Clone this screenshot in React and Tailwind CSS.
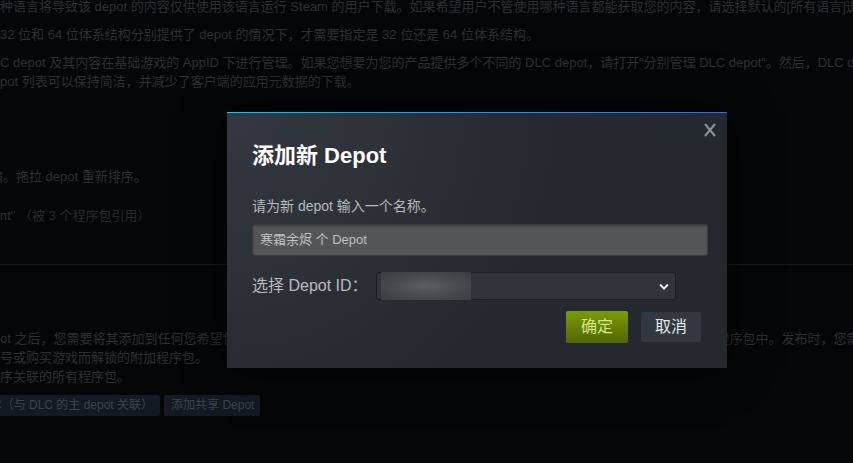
import React from "react";

const FONT = { fontFamily: '"Liberation Sans", "Noto Sans CJK SC", sans-serif' };

export default function App() {
  return (
    <div
      className="relative w-[853px] h-[463px] overflow-hidden bg-[#050608]"
      style={FONT}
    >
      {/* dimmed page content */}
      <div className="text-[13px] leading-[19px] text-[#2d2e31] -mt-[3px]">
        <p className="whitespace-nowrap mb-[9px]">
          种语言将导致该 depot 的内容仅供使用该语言运行 Steam 的用户下载。如果希望用户不管使用哪种语言都能获取您的内容，请选择默认的[所有语言]选项。
        </p>
        <p className="whitespace-nowrap mb-[9px]">
          32 位和 64 位体系结构分别提供了 depot 的情况下，才需要指定是 32 位还是 64 位体系结构。
        </p>
        <p className="whitespace-nowrap">
          C depot 及其内容在基础游戏的 AppID 下进行管理。如果您想要为您的产品提供多个不同的 DLC depot，请打开“分别管理 DLC depot”。然后，DLC depot 将单独列出。
        </p>
        <p className="whitespace-nowrap">
          pot 列表可以保持简洁，并减少了客户端的应用元数据的下载。
        </p>
        <p className="whitespace-nowrap mt-[76px] -ml-[10px]">
          编。拖拉 depot 重新排序。
        </p>
        <p className="whitespace-nowrap mt-[20px]">
          nt" <span className="text-[#28292c]">（被 3 个程序包引用）</span>
        </p>
        <div className="mt-[39px] h-px bg-[#15181d]" />
        <div className="mt-[64px]">
          <p className="whitespace-nowrap">
            ot 之后，您需要将其添加到任何您希望包含此内容的基础游戏程序包、开发者综合包、测试版本，以及免费周末等其他相关的程序包中。发布时，您需要将其添加到所有程序包中。
          </p>
          <p className="whitespace-nowrap">号或购买游戏而解锁的附加程序包。</p>
          <p className="whitespace-nowrap">序关联的所有程序包。</p>
        </div>
        <div className="mt-[9px] flex gap-[4px] text-[12px] leading-[21px] text-[#3b424b]">
          <div className="-ml-[14px] h-[21px] pl-[7px] pr-[7px] rounded-[2px] bg-[#141a22] whitespace-nowrap">
            C（与 DLC 的主 depot 关联）
          </div>
          <div className="h-[21px] pl-[7px] pr-[6px] rounded-[2px] bg-[#141a22] whitespace-nowrap">
            添加共享 Depot
          </div>
        </div>
      </div>

      {/* modal dialog */}
      <div className="absolute left-[227px] top-[112px] w-[500px] bg-[#25282e] bg-[radial-gradient(circle_at_top_left,rgba(74,81,92,0.4)_0%,rgba(75,81,92,0)_60%)] shadow-[0_0_40px_rgba(0,0,0,0.6)]">
        <div className="h-px bg-[linear-gradient(to_right,#00ccff,#3366ff)]" />
        <button className="absolute right-[11px] top-[11px] w-[12px] h-[14px] flex items-center justify-center">
          <svg width="12" height="14" viewBox="0 0 12 14">
            <path d="M1 1 L11 13 M11 1 L1 13" stroke="#8b929a" strokeWidth="2" fill="none" />
          </svg>
        </button>
        <div className="pl-[25px] pr-[26px] pt-[28px] pb-[25px]">
          <h1 className="text-[22px] leading-[30px] font-bold text-white">添加新 Depot</h1>
          <p className="mt-[25px] text-[14px] leading-[20px] text-[#b6bbbf]">
            请为新 depot 输入一个名称。
          </p>
          <div className="mt-[8px] w-[456px] h-[32px] flex items-center pl-[7px] rounded-[3px] bg-[#545557] border border-[#3a3c40] shadow-[inset_0_1px_2px_rgba(0,0,0,0.3)] text-[13px] text-[#bfc1c3]">
            寒霜余烬 个 Depot
          </div>
          <div className="mt-[16px] flex items-center h-[28px]">
            <span className="text-[16px] text-[#b6bbbf] whitespace-nowrap">选择 Depot ID：</span>
            <div className="ml-[8px] w-[300px] h-[28px] flex items-center justify-between rounded-[3px] bg-[#31343a] border border-[#1c1e22] pl-[4px] pr-[6px]">
              <div className="w-[90px] h-[28px] bg-[radial-gradient(ellipse_at_center,#5b5e63_0%,#46494e_55%,#3a3d42_100%)]" />
              <svg width="10" height="7" viewBox="0 0 10 7">
                <polyline points="1,1.5 5,5.5 9,1.5" stroke="#e6e8ea" strokeWidth="2" fill="none" />
              </svg>
            </div>
          </div>
          <div className="mt-[11px] flex justify-end items-center gap-[13px]">
            <button className="w-[62px] h-[32px] rounded-[2px] bg-[linear-gradient(to_bottom,#799905_5%,#536904_95%)] text-[16px] text-[#d2e885]">
              确定
            </button>
            <button className="w-[60px] h-[30px] rounded-[2px] bg-[#33373f] text-[16px] text-[#e2e7ec]">
              取消
            </button>
          </div>
        </div>
      </div>
    </div>
  );
}
